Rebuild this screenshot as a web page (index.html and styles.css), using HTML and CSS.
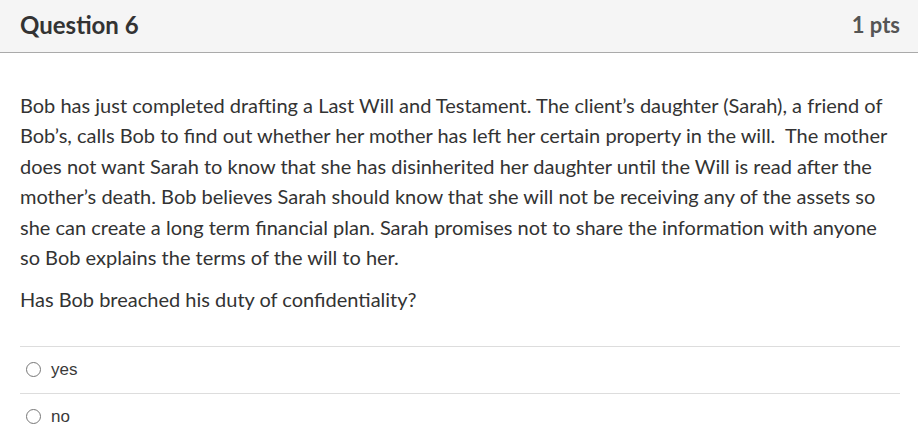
FILE: index.html
```html
<!DOCTYPE html>
<html>
<head>
<meta charset="utf-8">
<link rel="stylesheet" href="styles.css">
</head>
<body>
<div class="question">
  <div class="header">
    <span class="title">Question 6</span>
    <span class="pts">1 pts</span>
  </div>
  <div class="content">
    <div class="text">
      <p>Bob has just completed drafting a Last Will and Testament. The client’s daughter (Sarah), a friend of Bob’s, calls Bob to find out whether her mother has left her certain property in the will.&nbsp; The mother does not want Sarah to know that she has disinherited her daughter until the Will is read after the mother’s death. Bob believes Sarah should know that she will not be receiving any of the assets so she can create a long term financial plan. Sarah promises not to share the information with anyone so Bob explains the terms of the will to her.</p>
      <p>Has Bob breached his duty of confidentiality?</p>
    </div>
    <div class="answers">
      <label class="answer"><span class="radio"></span><span class="label">yes</span></label>
      <label class="answer"><span class="radio"></span><span class="label">no</span></label>
    </div>
  </div>
</div>
</body>
</html>
```

FILE: styles.css
```css
html, body {
  margin: 0;
  padding: 0;
  background: #fff;
}
body {
  font-family: Lato, "Open Sans", sans-serif;
  color: #333;
}
.question {
  width: 918px;
}
.header {
  height: 53px;
  background: #f5f5f5;
  border-bottom: 1px solid #aaa;
  display: flex;
  align-items: center;
  justify-content: space-between;
  padding: 0 18px 3px 20px;
  box-sizing: border-box;
}
.title {
  font-weight: 700;
  font-size: 24px;
  color: #333;
}
.pts {
  font-weight: 700;
  font-size: 22px;
  color: #555;
}
.content {
  padding: 37px 18px 0 20px;
}
.text {
  padding-right: 8px;
}
.text p {
  margin: 0 0 12px;
  font-size: 20px;
  line-height: 30.4px;
  color: #333;
}
.answers {
  margin-top: 31px;
}
.answer {
  display: flex;
  align-items: center;
  height: 46px;
  border-top: 1px solid #ddd;
  font-family: "Liberation Sans", Arial, sans-serif;
  font-size: 17px;
  color: #3a3a3a;
}
.radio {
  width: 15px;
  height: 15px;
  border: 1px solid #777;
  border-radius: 50%;
  box-sizing: border-box;
  margin: 0 10px 0 6px;
}
```
